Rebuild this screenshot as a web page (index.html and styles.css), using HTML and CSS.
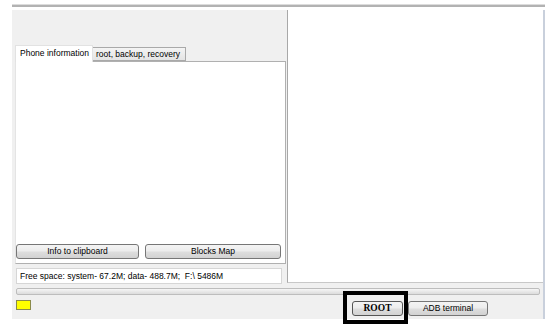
FILE: index.html
```html
<!DOCTYPE html>
<html lang="en">
<head>
    <meta charset="UTF-8">
    <title>Phone tool</title>
    <link rel="stylesheet" href="styles.css">
</head>
<body>
    <div class="topline"></div>
    <div id="window">
        <div class="panes">
            <div class="left">
                <div class="tabs">
                    <div class="tab active">Phone information</div>
                    <div class="tab">root, backup, recovery</div>
                </div>
                <div class="page">
                    <div class="page-buttons">
                        <button class="btn">Info to clipboard</button>
                        <button class="btn">Blocks Map</button>
                    </div>
                </div>
                <div class="free">Free space: system- 67.2M; data- 488.7M;&nbsp; F:\ 5486M</div>
            </div>
            <div class="right"></div>
        </div>
        <div class="progress"></div>
        <div class="bottom">
            <div class="led"></div>
            <div class="actions">
                <button class="btn root">ROOT</button>
                <button class="btn adb">ADB terminal</button>
            </div>
        </div>
    </div>
</body>
</html>
```

FILE: styles.css
```css
body {
    margin: 0;
    padding: 0;
    width: 560px;
    height: 336px;
    background: #ffffff;
    font-family: 'Liberation Sans', Arial, sans-serif;
    font-size: 8.5px;
    color: #000;
    overflow: hidden;
}

.topline {
    margin: 4px 15px 0 12px;
    height: 2px;
    background: #b2b2b2;
    border-top: 1px solid #dcdcdc;
}

#window {
    margin: 3px 0 0 12px;
    width: 531px;
    background: #f0f0f0;
    border-right: 2px solid #c9d0dc;
    padding-bottom: 4px;
}

.panes {
    display: flex;
    height: 273px;
}

.left {
    width: 275px;
    padding: 35px 0 0 3px;
    box-sizing: border-box;
}

.tabs {
    display: flex;
    align-items: flex-end;
    height: 16px;
    position: relative;
    z-index: 1;
}

.tab {
    box-sizing: border-box;
    width: 93px;
    height: 14px;
    line-height: 12px;
    padding-left: 3px;
    background: linear-gradient(#f4f4f4, #e4e4e4);
    border: 1px solid #a9a9a9;
    border-left: none;
    margin-bottom: 0;
}

.tab.active {
    width: 78px;
    height: 17px;
    line-height: 14px;
    padding-left: 4px;
    background: #ffffff;
    border: 1px solid #e2e2e2;
    border-bottom: none;
    margin-bottom: -1px;
}

.page {
    box-sizing: border-box;
    width: 271px;
    height: 203px;
    background: #ffffff;
    border: 1px solid #b0b0b0;
    border-left-color: #e4e4e4;
    display: flex;
    flex-direction: column;
    justify-content: flex-end;
    padding: 0 3px 4px 0;
}

.page-buttons {
    display: grid;
    grid-template-columns: 123px 136px;
    gap: 6px;
}

.btn {
    box-sizing: border-box;
    height: 15px;
    padding: 0;
    border: 1px solid #767676;
    border-radius: 3px;
    background: linear-gradient(#f4f4f4 0%, #ececec 48%, #dedede 52%, #d2d2d2 100%);
    font-family: 'Liberation Sans', Arial, sans-serif;
    font-size: 8.5px;
    color: #000;
    line-height: 13px;
}

.free {
    box-sizing: border-box;
    margin: 4px 0 0 1px;
    width: 266px;
    height: 16px;
    line-height: 14px;
    padding-left: 3px;
    background: #ffffff;
    border: 1px solid #d6d6d6;
}

.right {
    flex: 1;
    background: #ffffff;
    border-left: 1px solid #a8a8a8;
    border-bottom: 1px solid #c8c8c8;
}

.progress {
    box-sizing: border-box;
    margin: 5px 3px 0 4px;
    height: 7px;
    border: 1px solid #bdbdbd;
    border-radius: 2px;
    background: linear-gradient(#f6f6f6, #dcdcdc);
}

.bottom {
    display: flex;
    align-items: flex-start;
    margin-top: 5px;
    height: 15px;
}

.led {
    box-sizing: border-box;
    width: 15px;
    height: 10px;
    margin-left: 4px;
    background: #ffff00;
    border: 1px solid #8a8a4a;
}

.actions {
    display: flex;
    gap: 5px;
    margin-left: auto;
    margin-right: 55px;
    padding-top: 1px;
}

.root {
    position: relative;
    width: 51px;
    font-family: 'Liberation Serif', 'Times New Roman', serif;
    font-weight: bold;
    font-size: 9.5px;
    border-color: #555;
}

/* highlight frame drawn over the ROOT button */
.root::after {
    content: '';
    position: absolute;
    top: -11px;
    left: -10px;
    right: -6px;
    bottom: -9px;
    border: 4px solid #000;
}

.adb {
    width: 80px;
}
```
